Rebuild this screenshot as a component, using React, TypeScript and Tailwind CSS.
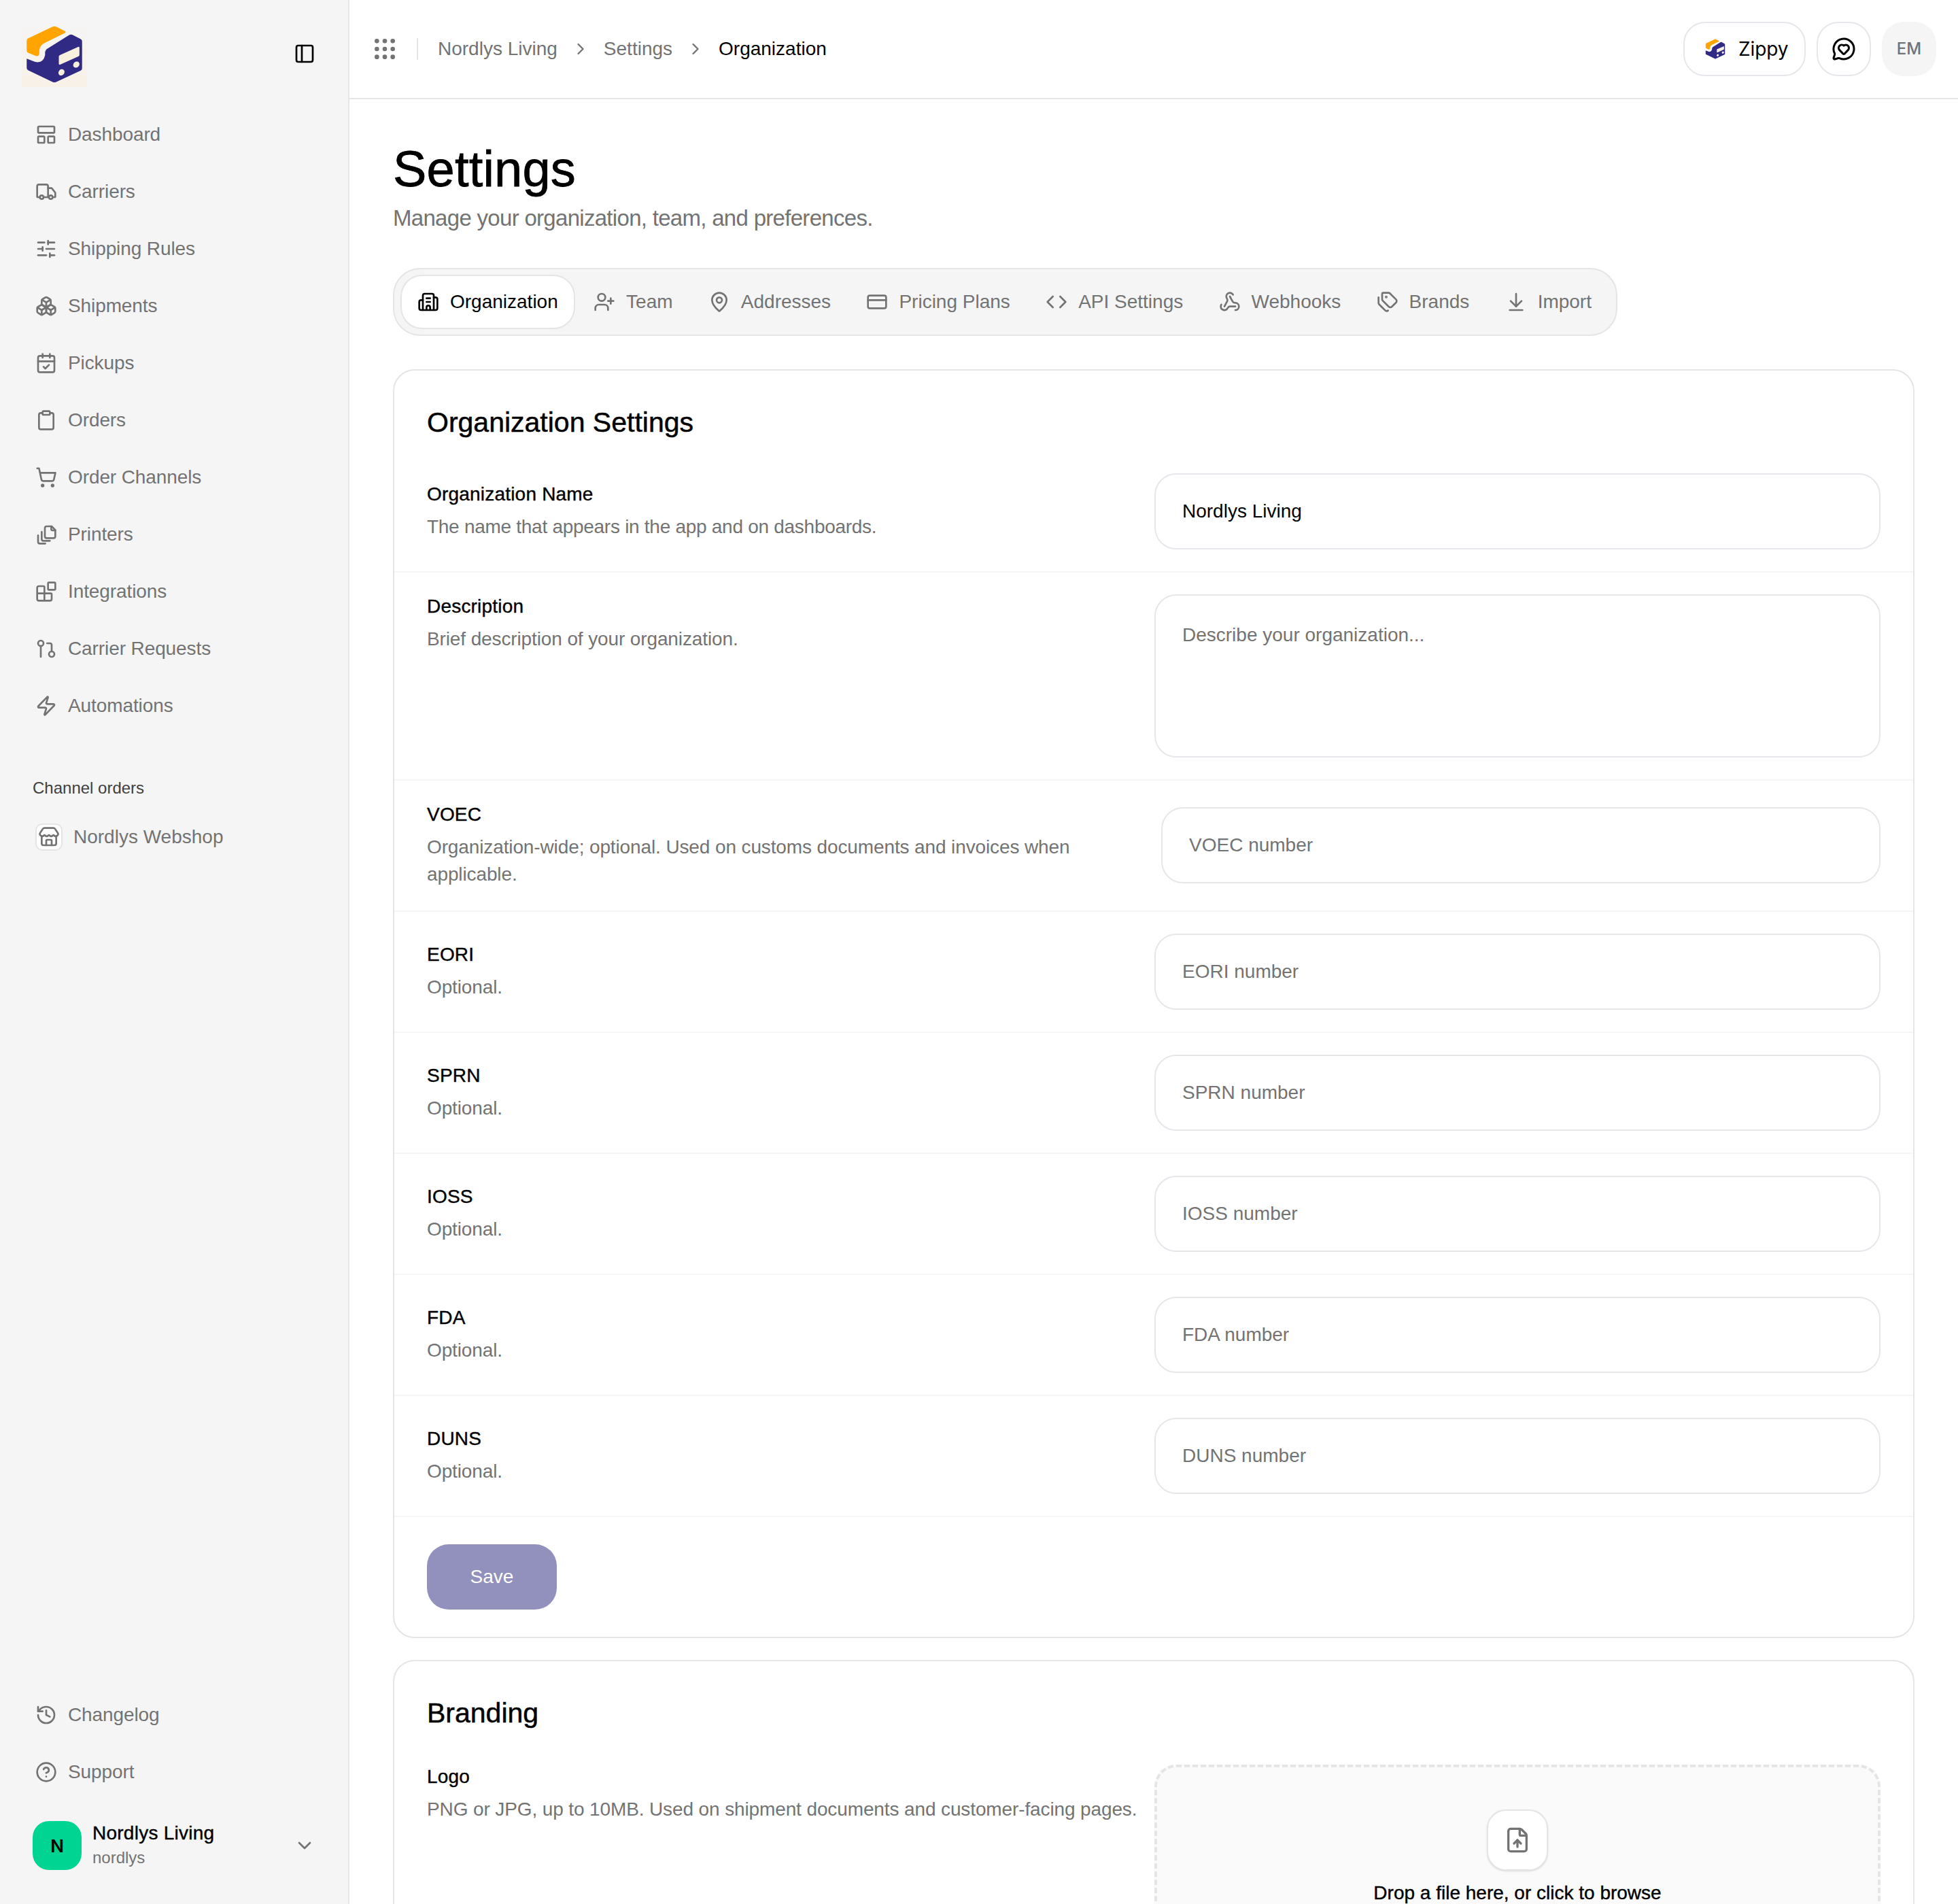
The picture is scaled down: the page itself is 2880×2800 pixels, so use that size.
import React from 'react';
import {
  ArrowDownToLine, Blocks, Boxes, Building2, CalendarCheck, ChevronDown, ChevronRight, CircleHelp, Clipboard, Code,
  CreditCard, FileUp, GitPullRequest, Grip, History, LayoutPanelTop, MapPin, MessageCircleHeart, PanelLeft,
  ShoppingCart, SlidersHorizontal, Store, Tags, Truck, UserPlus, Webhook, Zap,
} from 'lucide-react';

const PrintersIcon: React.FC<{ className?: string }> = ({ className }) => (
  <svg viewBox="0 0 24 24" fill="none" stroke="currentColor" strokeWidth={2} strokeLinecap="round" strokeLinejoin="round" className={className}>
    <path d="M12.5 3H18l4 4v7a2 2 0 0 1-2 2h-7.5a2 2 0 0 1-2-2V5a2 2 0 0 1 2-2z" />
    <path d="M17.5 3v3a1.5 1.5 0 0 0 1.5 1.5h3" />
    <path d="M7 9v8a2 2 0 0 0 2 2h7" />
    <path d="M3 13v7a2 2 0 0 0 2 2h6" />
  </svg>
);

const ZippyMark: React.FC<{ className?: string }> = ({ className }) => (
  <svg viewBox="50 48 260 264" className={className}>
    <path d="M172 55q8-4 16 0l38 19q10 5 0 10l-86 42q-26 12-28 34v12q-1 20-18 14l-33-14q-6-3-6-10v-44q0-7 6-10z" fill="#ffa400" />
    <path d="M248 92q7-3 14 0l37 19q6 3 6 10v122q0 7-6 10l-112 52q-7 3-14 0l-112-54q-6-3-6-10v-42l36 14q38 10 47-30v-12q1-12 12-18z" fill="#312a85" />
    <path d="M200 190q0-5 5-7l82-37q6-2 6 4v32q0 5-5 7l-82 37q-6 2-6-4z" fill="#f9efdf" />
    <ellipse cx="212" cy="261" rx="13" ry="15" transform="rotate(40 212 261)" fill="#f9efdf" />
    <ellipse cx="279" cy="226" rx="13" ry="15" transform="rotate(50 279 226)" fill="#f9efdf" />
  </svg>
);

const navItems = [
  { label: 'Dashboard', Icon: LayoutPanelTop },
  { label: 'Carriers', Icon: Truck },
  { label: 'Shipping Rules', Icon: SlidersHorizontal },
  { label: 'Shipments', Icon: Boxes },
  { label: 'Pickups', Icon: CalendarCheck },
  { label: 'Orders', Icon: Clipboard },
  { label: 'Order Channels', Icon: ShoppingCart },
  { label: 'Printers', Icon: PrintersIcon },
  { label: 'Integrations', Icon: Blocks },
  { label: 'Carrier Requests', Icon: GitPullRequest },
  { label: 'Automations', Icon: Zap },
];

const tabs = [
  { label: 'Organization', Icon: Building2, active: true },
  { label: 'Team', Icon: UserPlus },
  { label: 'Addresses', Icon: MapPin },
  { label: 'Pricing Plans', Icon: CreditCard },
  { label: 'API Settings', Icon: Code },
  { label: 'Webhooks', Icon: Webhook },
  { label: 'Brands', Icon: Tags },
  { label: 'Import', Icon: ArrowDownToLine },
];

const optionalRows = ['EORI', 'SPRN', 'IOSS', 'FDA', 'DUNS'];

const NavRow: React.FC<{ label: string; Icon: React.ElementType }> = ({ label, Icon }) => (
  <a className="flex h-[76px] items-center gap-4 rounded-[24px] px-5 tracking-[-0.1px] text-[#737373]">
    <Icon className="h-8 w-8" />
    <span>{label}</span>
  </a>
);

const Field: React.FC<{ placeholder?: string; value?: string; className?: string }> = ({ placeholder, value, className = 'w-[1068px]' }) => (
  <div className={`flex h-[112px] shrink-0 items-center rounded-[32px] border-2 border-[#e5e7eb] bg-white px-[39px] ${className}`}>
    {value ? <span className="text-black">{value}</span> : <span className="text-[#737373]">{placeholder}</span>}
  </div>
);

const RowText: React.FC<{ label: string; children: React.ReactNode }> = ({ label, children }) => (
  <div>
    <div className="h-[36px] leading-[36px] tracking-[0.2px] text-black [-webkit-text-stroke:0.4px_black]">{label}</div>
    <div className="mt-[10px] leading-[40px] tracking-[-0.12px] text-[#737373]">{children}</div>
  </div>
);

export default function App() {
  return (
    <div className="flex h-[2800px] w-full overflow-hidden bg-white text-[28px] text-black [font-family:'Liberation_Sans',sans-serif]">
      <aside className="flex h-full w-[514px] shrink-0 flex-col border-r-2 border-[#e5e5e5] bg-[#f5f5f5] px-8">
        <div className="flex h-[160px] shrink-0 items-start justify-between pt-8">
          <div className="h-24 w-24 bg-gradient-to-b from-[#f5f5f5] to-[#f8f1e7] p-[5px]">
            <ZippyMark className="h-[86px] w-[86px]" />
          </div>
          <PanelLeft className="mr-[16px] mt-[31px] h-8 w-8 text-black" />
        </div>
        <nav className="flex flex-col gap-2">
          {navItems.map((item) => (
            <NavRow key={item.label} {...item} />
          ))}
        </nav>
        <div className="mt-[67px] px-4 text-[24px] leading-8 text-[#404040]">Channel orders</div>
        <a className="mt-[18px] flex h-[76px] items-center gap-4 px-5 text-[#737373]">
          <span className="flex h-10 w-10 items-center justify-center rounded-[10px] border-2 border-[#e5e5e5] bg-white">
            <Store className="h-8 w-8" />
          </span>
          <span>Nordlys Webshop</span>
        </a>
        <div className="mt-auto flex flex-col gap-2">
          <NavRow label="Changelog" Icon={History} />
          <NavRow label="Support" Icon={CircleHelp} />
        </div>
        <div className="mb-[50px] mt-[34px] flex items-center gap-4 px-4">
          <div className="flex h-[72px] w-[72px] items-center justify-center rounded-[24px] bg-[#00d492] text-[26px] font-semibold text-black [font-family:Inter,sans-serif]">N</div>
          <div className="flex-1">
            <div className="leading-9 tracking-[0.25px] text-black [-webkit-text-stroke:0.4px_black]">Nordlys Living</div>
            <div className="text-[24px] leading-9 text-[#737373]">nordlys</div>
          </div>
          <ChevronDown className="h-8 w-8 text-[#737373]" />
        </div>
      </aside>

      <div className="flex min-w-0 flex-1 flex-col">
        <header className="flex h-[146px] shrink-0 items-center border-b-2 border-[#e5e5e5] pl-8 pr-8">
          <Grip className="h-10 w-10 text-[#737373]" />
          <div className="ml-[27px] h-8 w-[2px] bg-[#e5e5e5]" />
          <nav className="ml-[29px] flex items-center text-[#737373]">
            <span>Nordlys Living</span>
            <ChevronRight className="mx-[20px] h-7 w-7" />
            <span>Settings</span>
            <ChevronRight className="mx-[20px] h-7 w-7" />
            <span className="text-black">Organization</span>
          </nav>
          <div className="ml-auto flex items-center gap-4">
            <button className="flex h-20 w-[180px] items-center gap-[19px] rounded-[32px] border-2 border-[#e5e7eb] pl-[30px] text-[28px] tracking-[-0.1px] [font-family:Inter,sans-serif]">
              <ZippyMark className="h-[30px] w-[30px]" />
              <span>Zippy</span>
            </button>
            <button className="flex h-20 w-20 items-center justify-center rounded-[32px] border-2 border-[#e5e7eb]">
              <MessageCircleHeart className="h-9 w-9" />
            </button>
            <div className="flex h-20 w-20 items-center justify-center rounded-[32px] bg-[#f5f5f5] text-[24px] font-medium text-[#737373] [font-family:Inter,sans-serif]">EM</div>
          </div>
        </header>

        <main className="flex-1 px-16 pt-16">
          <h1 className="text-[74px] leading-[78px] tracking-[0.2px] [-webkit-text-stroke:0.8px_black]">Settings</h1>
          <p className="mt-[13px] text-[33px] leading-[40px] tracking-[-0.7px] text-[#737373]">Manage your organization, team, and preferences.</p>

          <div className="mt-[53px] flex h-[100px] w-fit items-center gap-[2.3px] rounded-[40px] border-2 border-[#e5e5e5] bg-[#f5f5f5] pl-[9px] pr-[11px]">
            {tabs.map(({ label, Icon, active }) => (
              <div key={label} className={active ? 'flex h-20 items-center gap-4 rounded-[32px] border-2 border-[#e5e5e5] bg-white px-[23px] text-black' : 'flex h-20 items-center gap-4 rounded-[32px] border-2 border-transparent px-[23px] text-[#737373]'}>
                <Icon className="h-8 w-8" />
                <span>{label}</span>
              </div>
            ))}
          </div>

          <section className="mt-[49px] rounded-[32px] border-2 border-[#e5e5e5] bg-white">
            <h2 className="px-12 pt-12 text-[41px] leading-[56px] [-webkit-text-stroke:0.5px_black]">Organization Settings</h2>
            <div className="mt-[15px] flex items-center justify-between border-b-2 border-[#f5f5f5] px-12 py-8">
              <RowText label="Organization Name"><span className="tracking-[-0.28px]">The name that appears in the app and on dashboards.</span></RowText>
              <Field value="Nordlys Living" />
            </div>
            <div className="flex items-start justify-between border-b-2 border-[#f5f5f5] px-12 py-8">
              <RowText label="Description">Brief description of your organization.</RowText>
              <div className="h-[240px] w-[1068px] rounded-[32px] border-2 border-[#e5e7eb] bg-white px-[39px] py-[38px] leading-[40px] text-[#737373]">Describe your organization...</div>
            </div>
            <div className="flex items-center justify-between border-b-2 border-[#f5f5f5] px-12 pb-[33px] pt-8">
              <div className="max-w-[980px]">
                <RowText label="VOEC">Organization-wide; optional. Used on customs documents and invoices when applicable.</RowText>
              </div>
              <Field placeholder="VOEC number" className="w-[1058px]" />
            </div>
            {optionalRows.map((name) => (
              <div key={name} className="flex items-center justify-between border-b-2 border-[#f5f5f5] px-12 py-8">
                <RowText label={name}>Optional.</RowText>
                <Field placeholder={`${name} number`} />
              </div>
            ))}
            <div className="px-12 pb-10 pt-[40px]">
              <button className="h-24 w-[191px] rounded-[32px] bg-[#9291bd] text-white">Save</button>
            </div>
          </section>

          <section className="mt-[32px] rounded-t-[32px] border-2 border-[#e5e5e5] bg-white">
            <h2 className="px-12 pt-12 text-[41px] leading-[56px] [-webkit-text-stroke:0.5px_black]">Branding</h2>
            <div className="mt-[16px] flex items-start justify-between px-12 py-8">
              <RowText label="Logo">PNG or JPG, up to 10MB. Used on shipment documents and customer-facing pages.</RowText>
              <div className="flex h-[400px] w-[1068px] shrink-0 flex-col items-center rounded-[32px] border-4 border-dashed border-[#e5e5e5] bg-[#fafafa] pt-[62px]">
                <div className="flex h-[90px] w-[90px] items-center justify-center rounded-[28px] border-2 border-[#e5e5e5] bg-white shadow-sm">
                  <FileUp className="h-10 w-10 text-[#737373]" />
                </div>
                <div className="mt-[19px] leading-[28px] text-black [-webkit-text-stroke:0.4px_black]">Drop a file here, or click to browse</div>
              </div>
            </div>
          </section>
        </main>
      </div>
    </div>
  );
}
